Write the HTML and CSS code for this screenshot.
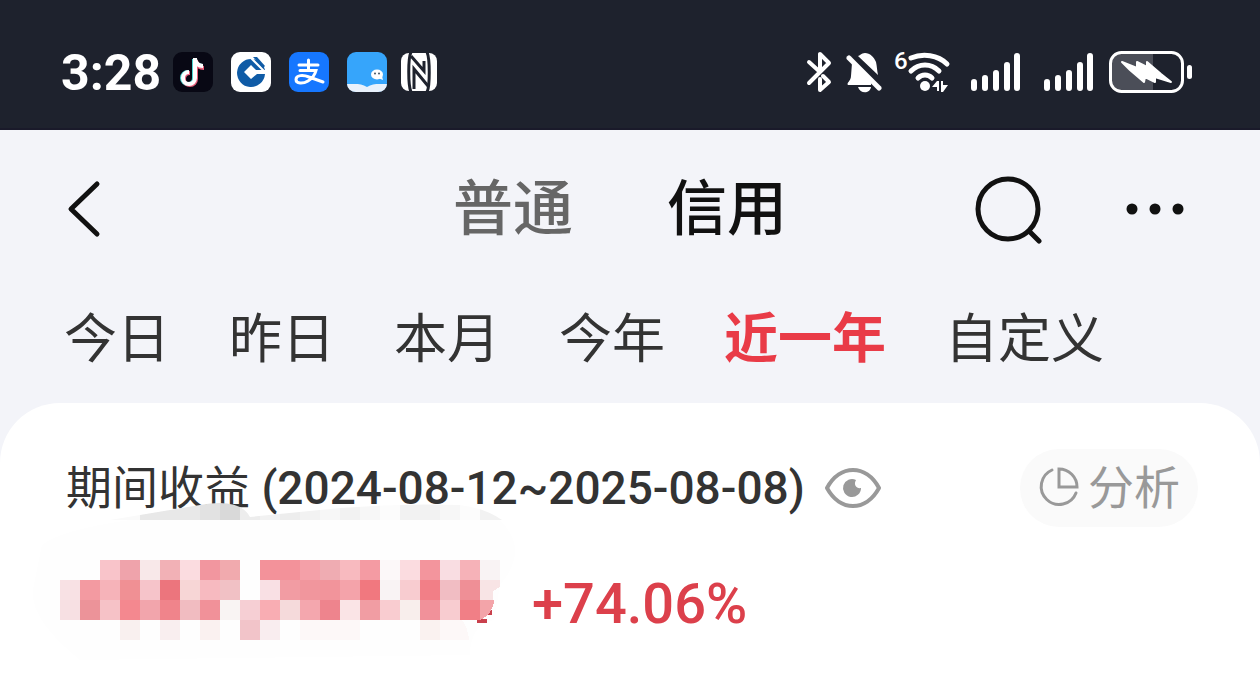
FILE: index.html
```html
<!DOCTYPE html>
<html lang="zh-CN">
<head>
    <meta charset="UTF-8">
    <meta name="viewport" content="width=device-width, initial-scale=1.0">
    <title>收益分析</title>
    <link rel="stylesheet" href="styles.css">
</head>
<body>
    <div class="status-bar">
        <div class="status-left">
            <span class="clock">3:28</span>
            <div class="apps">
                <svg width="40" height="40" viewBox="0 0 40 40">
                    <rect width="40" height="40" rx="9" fill="#080814"/>
                    <g fill="none" stroke-width="4">
                        <path d="M21 7v19a6 6 0 1 1-6-6M21 7c1 5 4 7 9 7" stroke="#4fd6d2"/>
                        <path d="M23 8v19a6 6 0 1 1-6-6M23 9c1 5 4 7 8 7" stroke="#e8607c"/>
                        <path d="M22 6v20a6 6 0 1 1-6-6M22 7c1 5 4 7 8 7" stroke="#fff"/>
                    </g>
                </svg>
                <svg width="40" height="40" viewBox="0 0 40 40">
                    <rect width="40" height="40" rx="9" fill="#fff"/>
                    <path d="M21 7a14 14 0 1 0 13 15h-8l-6 5-7-7 7-7 5 5h9a14 14 0 0 0-13-11z" fill="#0f5ba6"/>
                    <path d="M20 6l13 13" stroke="#fff" stroke-width="2"/>
                    <path d="M22 5h4l8 9-2 2z" fill="#0f5ba6"/>
                </svg>
                <svg width="40" height="40" viewBox="0 0 40 40">
                    <rect width="40" height="40" rx="9" fill="#1677ff"/>
                    <g fill="none" stroke="#fff" stroke-linecap="round">
                        <path d="M10 13h19M19.500 8v10" stroke-width="3"/>
                        <path d="M11 18.500h16c-1 4-4 8-8 10.500-5 3-12 3-12-1.500s7-5 13-2.500l14 5" stroke-width="3"/>
                    </g>
                </svg>
                <svg width="40" height="40" viewBox="0 0 40 40">
                    <rect width="40" height="40" rx="9" fill="#36a5fb"/>
                    <path d="M0 32c8 0 14-1 20 3 6-4 12-3 20-3a9 8 0 0 1-9 8H9a9 8 0 0 1-9-8z" fill="#e9f1fb"/>
                    <ellipse cx="30" cy="22.500" rx="6" ry="5" fill="#fff"/>
                    <path d="M31 26l5 2-1-4z" fill="#fff"/>
                    <circle cx="28" cy="21.500" r="1" fill="#456"/>
                    <circle cx="32" cy="21.500" r="1" fill="#456"/>
                </svg>
                <svg class="nfc" width="36" height="40" viewBox="0 0 36 40">
                    <rect y="1" width="36" height="38" rx="8" fill="#fff"/>
                    <g fill="none" stroke="#1e222d" stroke-width="3">
                        <path d="M10 0C7 6 7 33 10 40M26 0c3 7 3 34 0 40"/>
                        <path d="M10 4l13 15V9M13 37V17l14 17"/>
                    </g>
                </svg>
            </div>
        </div>
        <div class="status-right">
            <svg class="bluetooth" width="26" height="44" viewBox="0 0 26 44" fill="none" stroke="#fff" stroke-width="4" stroke-linecap="round" stroke-linejoin="round">
                <path d="M3 12l11 10M3 33l20-20-9-9v14M14 29v11l9-8-6-6"/>
            </svg>
            <svg class="bell" width="36" height="44" viewBox="0 0 36 44" fill="#fff">
                <path d="M12 6c2 0 3-3 7-3 5 0 9 4 11 9 1 4 1 9 2 13zM6 13l19 19v3H2c-2-2 3-4 3-9zM12 37h13c-1 7-11 7-13 0z"/>
                <path d="M3 8l30 30" stroke="#fff" stroke-width="5" stroke-linecap="round"/>
                <path d="M8 7l25 25" stroke="#1e222d" stroke-width="2"/>
            </svg>
            <svg class="wifi" width="58" height="56" viewBox="0 -6 58 56">
                <text class="wifi-gen" x="0" y="19">6</text>
                <g fill="none" stroke="#fff" stroke-width="5" stroke-linecap="round">
                    <path d="M17 8c12-5 27-3 36 6M17 21c8-8 20-8 28 0M24 28c4-4 10-4 14 0"/>
                </g>
                <circle cx="31" cy="36" r="5" fill="#fff"/>
                <path d="M38 37l5-6h2v10h-2v-4zM47 31h2v4h5l-5 7h-2z" fill="#fff"/>
            </svg>
            <svg class="signal" width="50" height="44" viewBox="0 0 50 44" stroke="#fff" stroke-width="6" stroke-linecap="round">
                <path d="M3 32v6M14 28v10M25 23v15M36 15v23M46 6v32"/>
            </svg>
            <svg class="signal" width="50" height="44" viewBox="0 0 50 44" stroke="#fff" stroke-width="6" stroke-linecap="round">
                <path d="M3 32v6M14 28v10M25 23v15M36 15v23M46 6v32"/>
            </svg>
            <svg width="84" height="44" viewBox="0 0 84 44">
                <path d="M13 2h31v40H13A11 11 0 0 1 2 31V13A11 11 0 0 1 13 2z" fill="#4b4e58"/>
                <rect x="1.500" y="2.500" width="72" height="39" rx="11" fill="none" stroke="#fff" stroke-width="3"/>
                <rect x="78" y="15" width="5" height="14" rx="2.500" fill="#fff"/>
                <path d="M13 12l15 6v-6l10 5v-5l14 12 10 8-16-5v5l-10-5-1 5-14-12z" fill="#fff" stroke="#fff" stroke-width="2" stroke-linejoin="round"/>
            </svg>
        </div>
    </div>

    <header class="nav">
        <button class="icon-btn back" aria-label="返回">
            <svg width="60" height="70" viewBox="0 0 60 70" fill="none" stroke="#111" stroke-width="5" stroke-linecap="round" stroke-linejoin="round">
                <path d="M41 10L15 35l26 25"/>
            </svg>
        </button>
        <div class="accounts">
            <button class="account">普通</button>
            <button class="account active">信用</button>
        </div>
        <div class="actions">
            <button class="icon-btn" aria-label="搜索">
                <svg width="70" height="70" viewBox="0 0 70 70" fill="none" stroke="#111" stroke-width="5" stroke-linecap="round">
                    <circle cx="34" cy="35" r="30"/>
                    <path d="M56 58l9 9"/>
                </svg>
            </button>
            <button class="icon-btn" aria-label="更多">
                <svg width="60" height="70" viewBox="0 0 60 70" fill="#111">
                    <circle cx="8" cy="35" r="5.500"/>
                    <circle cx="31" cy="35" r="5.500"/>
                    <circle cx="54" cy="35" r="5.500"/>
                </svg>
            </button>
        </div>
    </header>

    <nav class="periods">
        <button class="period">今日</button>
        <button class="period">昨日</button>
        <button class="period">本月</button>
        <button class="period">今年</button>
        <button class="period active">近一年</button>
        <button class="period">自定义</button>
    </nav>

    <main class="card">
        <div class="card-head">
            <h1 class="card-title">期间收益 <span class="dates">(2024-08-12~2025-08-08)</span></h1>
            <button class="icon-btn" aria-label="隐藏金额">
                <svg width="56" height="42" viewBox="0 0 56 42">
                    <path d="M2 21C15-3 41-3 54 21 41 45 15 45 2 21z" fill="none" stroke="#999" stroke-width="4" stroke-linejoin="round"/>
                    <path d="M31 13a9 9 0 1 0 5 8c-4 1-8-3-5-8z" fill="#999"/>
                </svg>
            </button>
            <button class="analyse">
                <svg width="42" height="42" viewBox="0 0 42 42" fill="none" stroke="#999" stroke-width="3" stroke-linecap="round">
                    <path d="M14 3A18 18 0 1 0 38 26"/>
                    <path d="M21 2v18h18A18 18 0 0 0 21 2z"/>
                </svg>
                分析
            </button>
        </div>
        <div class="amount">
            <div class="masked">
                <!-- amount hidden behind a mosaic, 20px cells -->
                <svg class="mosaic" width="500" height="170" viewBox="30 500 500 170" shape-rendering="crispEdges">
                    <defs>
                        <clipPath id="brush">
                            <path d="M110 520L140 515 200 505Q240 498 250 517L340 508Q400 503 460 505 485 508 502 520z"/>
                        </clipPath>
                    </defs>
                    <path d="M42 545Q60 530 130 520H500Q530 550 500 585L494 620Q470 625 470 655L80 660Q30 620 33 590z" fill="#fefefe"/>
                    <g clip-path="url(#brush)">
                        <path d="M110 500h30v20h-30z" fill="#fafafa"/>
                        <path d="M140 500h60v20h-60z" fill="#e8e8e8"/>
                        <path d="M200 500h20v20h-20z" fill="#e2e2e2"/>
                        <path d="M220 500h20v20h-20z" fill="#d9d9d9"/>
                        <path d="M240 500h20v20h-20zM280 500h20v20h-20z" fill="#ededed"/>
                        <path d="M260 500h20v20h-20zM300 500h20v20h-20zM340 500h20v20h-20zM400 500h40v20h-40zM480 500h30v20h-30z" fill="#f2f2f2"/>
                        <path d="M320 500h20v20h-20zM360 500h20v20h-20zM440 500h20v20h-20z" fill="#f7f7f7"/>
                        <path d="M380 500h20v20h-20zM460 500h20v20h-20z" fill="#fcfcfc"/>
                    </g>
                    <path d="M477 619h10v4h-10zM487 610h5v5h-5z" fill="#c9404c"/>
                    <g>
                        <rect x="100" y="560" width="20" height="20" fill="#f9c4ca"/>
                        <rect x="120" y="560" width="20" height="20" fill="#efa3ab"/>
                        <rect x="140" y="560" width="20" height="20" fill="#f8e8e9"/>
                        <rect x="160" y="560" width="20" height="20" fill="#f2b1b6"/>
                        <rect x="180" y="560" width="20" height="20" fill="#fbdce0"/>
                        <rect x="200" y="560" width="20" height="20" fill="#f2969f"/>
                        <rect x="220" y="560" width="20" height="20" fill="#f1aaae"/>
                        <rect x="260" y="560" width="40" height="20" fill="#f3929a"/>
                        <rect x="300" y="560" width="20" height="20" fill="#f4a0a8"/>
                        <rect x="320" y="560" width="20" height="20" fill="#efacb2"/>
                        <rect x="340" y="560" width="20" height="20" fill="#f8babf"/>
                        <rect x="360" y="560" width="20" height="20" fill="#f49ba3"/>
                        <rect x="380" y="560" width="20" height="20" fill="#fcf8f9"/>
                        <rect x="400" y="560" width="20" height="20" fill="#fbdce0"/>
                        <rect x="420" y="560" width="20" height="20" fill="#f3959d"/>
                        <rect x="440" y="560" width="20" height="20" fill="#f9dde2"/>
                        <rect x="460" y="560" width="20" height="20" fill="#f6b2b8"/>
                        <rect x="480" y="560" width="20" height="20" fill="#f9f3f4"/>
                    </g>
                    <g>
                        <rect x="60" y="580" width="20" height="20" fill="#f8e1e4"/>
                        <rect x="80" y="580" width="20" height="20" fill="#f39aa1"/>
                        <rect x="100" y="580" width="20" height="20" fill="#f6b3b9"/>
                        <rect x="120" y="580" width="20" height="20" fill="#f09094"/>
                        <rect x="140" y="580" width="20" height="20" fill="#f6c4ca"/>
                        <rect x="160" y="580" width="20" height="20" fill="#ec757d"/>
                        <rect x="180" y="580" width="20" height="20" fill="#f7d6d6"/>
                        <rect x="200" y="580" width="20" height="20" fill="#f7bac0"/>
                        <rect x="220" y="580" width="20" height="20" fill="#f1c1c5"/>
                        <rect x="260" y="580" width="20" height="20" fill="#f9e0e4"/>
                        <rect x="280" y="580" width="20" height="20" fill="#f29ca3"/>
                        <rect x="300" y="580" width="20" height="20" fill="#f1969d"/>
                        <rect x="320" y="580" width="20" height="20" fill="#f2949b"/>
                        <rect x="340" y="580" width="20" height="20" fill="#f4a3aa"/>
                        <rect x="360" y="580" width="20" height="20" fill="#f1787f"/>
                        <rect x="380" y="580" width="20" height="20" fill="#f9f3f4"/>
                        <rect x="400" y="580" width="20" height="20" fill="#f8ccd0"/>
                        <rect x="420" y="580" width="20" height="20" fill="#f27f87"/>
                        <rect x="440" y="580" width="20" height="20" fill="#f1bdc3"/>
                        <rect x="460" y="580" width="20" height="20" fill="#ef8f96"/>
                        <path d="M480 580h20v7l-7 4v9h-13z" fill="#f8e4e5"/>
                    </g>
                    <g>
                        <rect x="60" y="600" width="20" height="20" fill="#f7e0e3"/>
                        <rect x="80" y="600" width="20" height="20" fill="#ec9399"/>
                        <rect x="100" y="600" width="20" height="20" fill="#f6c2c7"/>
                        <rect x="120" y="600" width="20" height="20" fill="#f4888f"/>
                        <rect x="140" y="600" width="20" height="20" fill="#f2a5ac"/>
                        <rect x="160" y="600" width="20" height="20" fill="#f0848b"/>
                        <rect x="180" y="600" width="20" height="20" fill="#f1bcc1"/>
                        <rect x="200" y="600" width="20" height="20" fill="#f19199"/>
                        <rect x="220" y="600" width="20" height="20" fill="#f9f4f3"/>
                        <rect x="240" y="600" width="20" height="20" fill="#f6cfd4"/>
                        <rect x="260" y="600" width="20" height="20" fill="#f9adb3"/>
                        <rect x="280" y="600" width="20" height="20" fill="#f5dadb"/>
                        <rect x="300" y="600" width="20" height="20" fill="#f4a7ae"/>
                        <rect x="320" y="600" width="20" height="20" fill="#ee848d"/>
                        <rect x="340" y="600" width="20" height="20" fill="#fae4e6"/>
                        <rect x="360" y="600" width="20" height="20" fill="#f19da3"/>
                        <rect x="380" y="600" width="20" height="20" fill="#f9ccd0"/>
                        <rect x="400" y="600" width="20" height="20" fill="#f8eeec"/>
                        <rect x="420" y="600" width="20" height="20" fill="#f1919a"/>
                        <rect x="440" y="600" width="20" height="20" fill="#f8ccd0"/>
                        <rect x="460" y="600" width="20" height="20" fill="#f17f86"/>
                        <path d="M480 600h14q-1 14-14 20z" fill="#f3a4a9"/>
                    </g>
                    <g>
                        <rect x="120" y="620" width="20" height="20" fill="#f9f0ef"/>
                        <rect x="160" y="620" width="20" height="20" fill="#f9eeef"/>
                        <rect x="200" y="620" width="20" height="20" fill="#faf1f0"/>
                        <rect x="240" y="620" width="20" height="20" fill="#f2c4c9"/>
                        <rect x="260" y="620" width="20" height="20" fill="#f9edef"/>
                        <rect x="300" y="620" width="60" height="20" fill="#fdf8f8"/>
                        <rect x="420" y="620" width="20" height="20" fill="#faf2f0"/>
                        <path d="M440 620h22q6 8 7 20h-29z" fill="#fdf8f8"/>
                    </g>
                </svg>
            </div>
            <span class="percent">+74.06%</span>
        </div>
    </main>
</body>
</html>
```

FILE: styles.css
```css
* {
    box-sizing: border-box;
}

body {
    margin: 0;
    min-height: 100vh;
    display: flex;
    flex-direction: column;
    background-color: #f3f4f9;
    color: #333;
    font-family: Roboto, "Noto Sans CJK SC", sans-serif;
}

button {
    padding: 0;
    border: none;
    background: none;
    color: inherit;
    font-family: inherit;
    cursor: pointer;
}

svg {
    display: block;
    flex-shrink: 0;
}

/* status bar */
.status-bar {
    display: flex;
    justify-content: space-between;
    align-items: center;
    height: 130px;
    padding: 16px 67px 0 61px;
    background-color: #1e222d;
    border-bottom: 2px solid #1a1a2a;
    color: #fff;
}

.status-left, .status-right, .apps {
    display: flex;
    align-items: center;
}

.status-left {
    gap: 12px;
}

.clock {
    padding-top: 2px;
    font-size: 50px;
    line-height: 60px;
    font-weight: 700;
}

.apps {
    gap: 18px;
}

.nfc {
    margin-left: -4px;
}

.bluetooth {
    margin-right: 14px;
}

.bell {
    margin-right: 12px;
}

.wifi {
    margin-right: 19px;
}

.wifi-gen {
    fill: #fff;
    font-size: 24px;
    font-weight: 500;
}

.signal {
    margin-right: 23px;
}

.signal + .signal {
    margin-right: 15px;
}

/* title row */
.nav {
    display: grid;
    grid-template-columns: 1fr auto 1fr;
    align-items: center;
    padding: 37px 76px 0 56px;
}

.icon-btn {
    flex-shrink: 0;
}

.back {
    justify-self: start;
}

.accounts {
    display: flex;
    gap: 94px;
}

.account {
    padding-top: 2px;
    font-size: 60px;
    line-height: 82px;
    font-weight: 500;
    color: #666;
}

.account.active {
    color: #111;
}

.actions {
    display: flex;
    justify-content: flex-end;
    gap: 80px;
}

/* period tabs */
.periods {
    display: flex;
    gap: 59px;
    padding: 53px 64px 27px;
}

.period {
    font-size: 53px;
    line-height: 72px;
    white-space: nowrap;
}

.period.active {
    font-size: 54px;
    font-weight: 700;
    color: #e93b47;
}

/* income card */
.card {
    flex: 1;
    padding: 46px 62px 40px 66px;
    background-color: #fff;
    border-radius: 60px 60px 0 0;
}

.card-head {
    display: flex;
    align-items: center;
    gap: 20px;
    height: 78px;
}

.card-title {
    margin: 0;
    font-size: 46px;
    line-height: 64px;
    font-weight: 400;
    white-space: nowrap;
}

.dates {
    font-weight: 500;
}

.analyse {
    display: flex;
    align-items: center;
    gap: 8px;
    height: 78px;
    margin-left: auto;
    padding: 0 18px;
    border-radius: 40px;
    background-color: #fafafa;
    color: #999;
    font-size: 46px;
    line-height: 64px;
    white-space: nowrap;
}

.amount {
    display: flex;
    align-items: center;
    height: 80px;
    margin-top: 37px;
}

.masked {
    position: relative;
    width: 466px;
    height: 80px;
}

/* the brush also runs over the line above */
.mosaic {
    position: absolute;
    left: -36px;
    top: -64px;
}

.percent {
    font-size: 56px;
    line-height: 64px;
    font-weight: 500;
    color: #dc404b;
}
```
